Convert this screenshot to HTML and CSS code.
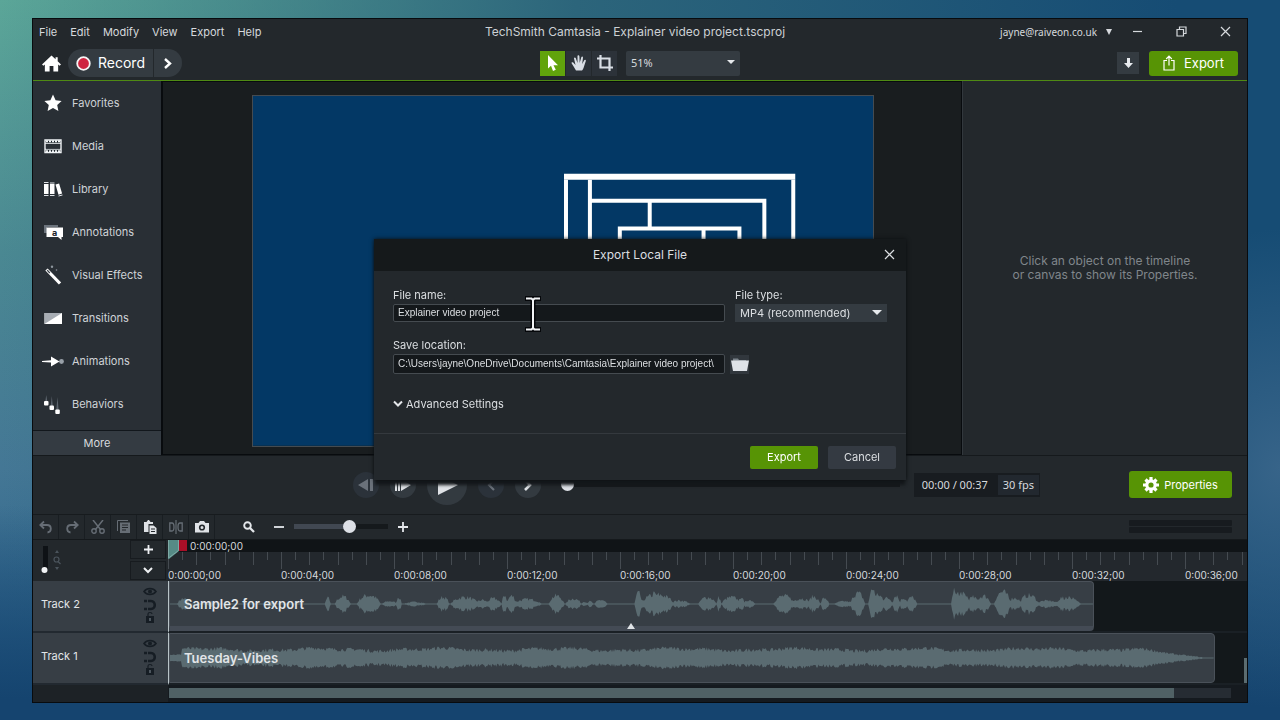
FILE: index.html
```html
<!DOCTYPE html>
<html lang="en">
<head>
<meta charset="utf-8">
<title>TechSmith Camtasia - Explainer video project.tscproj</title>
<link rel="stylesheet" href="styles.css">
</head>
<body>
<div class="window">
  <header class="titlebar">
    <nav class="menu">
      <button>File</button><button>Edit</button><button>Modify</button><button>View</button><button>Export</button><button>Help</button>
    </nav>
    <h1 class="title">TechSmith Camtasia - Explainer video project.tscproj</h1>
    <div class="account">
      <button class="user">jayne@raiveon.co.uk <svg width="6" height="6" viewBox="0 0 6 6"><path d="M0 0h6L3 6z" fill="currentColor"/></svg></button>
      <button class="win-btn" aria-label="Minimize"><svg width="11" height="11" viewBox="0 0 11 11"><path d="M1 5.500h9" class="line"/></svg></button>
      <button class="win-btn" aria-label="Restore"><svg width="11" height="11" viewBox="0 0 11 11"><path d="M1 3.500h6.500v6.500H1zM3.500 3.500V1H10v6.500H7.500" class="line"/></svg></button>
      <button class="win-btn" aria-label="Close"><svg width="11" height="11" viewBox="0 0 11 11"><path d="M1 1l9 9M10 1l-9 9" class="line"/></svg></button>
    </div>
  </header>

  <div class="toolbar">
    <div class="tool-left">
      <button class="home" aria-label="Home"><svg width="19" height="17" viewBox="0 0 20 17"><path d="M10 0L0 9.500l1.500 1.300L3 9.500V17h5v-6h4v6h5V9.500l1.500 1.300L20 9.500l-3.500-3.300V2h-2.200v2z" fill="#fff"/></svg></button>
      <div class="record-group">
        <button class="record"><svg width="15" height="15" viewBox="0 0 15 15"><circle cx="7.500" cy="7.500" r="6.300" fill="#cf2440" stroke="#f5f5f5" stroke-width="1.800"/></svg>Record</button>
        <button class="record-more" aria-label="More recording options"><svg width="8" height="11" viewBox="0 0 8 11"><path d="M1 1l5 4.500L1 10" fill="none" stroke="#fff" stroke-width="2.400"/></svg></button>
      </div>
    </div>
    <div class="tool-mid">
      <button class="mode active" aria-label="Select"><svg width="12" height="16" viewBox="0 0 12 16"><path d="M1 0v13.500l3-2.800L6 16l2.800-1.200-2.300-4.600H11z" fill="#fff"/></svg></button>
      <button class="mode" aria-label="Pan"><svg width="16" height="16" viewBox="0 0 16 16"><path d="M5 15.500C3.500 13 2 10.500.6 8.300c-.6-1 .8-1.600 1.600-.8L4.500 10 3 3.500c-.2-1.200 1.300-1.600 1.700-.4L6.500 8V1.200C6.500-.2 8.300-.2 8.400 1.200L8.700 8l1.600-5.800c.4-1.200 1.900-.8 1.700.4L11.200 9l2-3.800c.7-1.100 2-.4 1.600.7L13 11.500c-.5 1.800-1 3-2 4z" fill="#d9dee5"/></svg></button>
      <button class="mode" aria-label="Crop"><svg width="16" height="16" viewBox="0 0 16 16"><path d="M0 3.500h12.500V16M3.500 0v12.500H16" fill="none" stroke="#d9dee5" stroke-width="2.200"/></svg></button>
      <div class="select-wrap zoom-select">
        <select aria-label="Canvas zoom"><option>51%</option></select>
        <svg width="8" height="4" viewBox="0 0 8 4"><path d="M0 0h8L4 4z" fill="#e6e9ec"/></svg>
      </div>
    </div>
    <div class="tool-right">
      <button class="download" aria-label="Downloads"><svg width="9" height="10" viewBox="0 0 9 10"><path d="M3 0h3v5h3L4.500 10 0 5h3z" fill="#e8ebef"/></svg></button>
      <button class="export-main"><svg width="12" height="16" viewBox="0 0 12 16"><path d="M4 5.500H1V15h10V5.500H8M6 10.500V1.500M3.200 4L6 1.200 8.800 4" class="line"/></svg>Export</button>
    </div>
  </div>

  <main class="workspace">
    <aside class="sidebar">
      <ul>
        <li><button><svg width="20" height="20" viewBox="0 0 20 20"><path d="M10 1.500l2.600 5.700 6 .7-4.400 4.100 1.200 6-5.400-3L4.600 18l1.200-6L1.400 7.900l6-.7z" fill="#fff"/></svg>Favorites</button></li>
        <li><button><svg width="20" height="20" viewBox="0 0 20 20"><path d="M2 4h16v12.500H2z" fill="#182027" stroke="#f0f3f5" stroke-width="1.400"/><path d="M3 5.300h14M3 15.200h14" stroke="#f0f3f5" stroke-width="2" stroke-dasharray="2 1"/><path d="M2 7.300h16M2 13.200h16" stroke="#f0f3f5"/><path d="M3 8h14v4.700H3z" fill="#292f35"/></svg>Media</button></li>
        <li><button><svg width="20" height="20" viewBox="0 0 20 20"><path d="M1 5h4.500v10H1zM7 5h4.500v10H7zM12.500 5.600l3.600-1 3 10-3.600 1.200z" fill="#fff"/><path d="M1 3.500h4.500M7 4h4.500M1 16.500h4.500M7 16.500h4.500M15.500 17l4-1" stroke="#dfe3e7"/></svg>Library</button></li>
        <li><button><svg width="20" height="20" viewBox="0 0 20 20"><path d="M1 3h14v2H4v6H1z" fill="#6b737c"/><path d="M3.500 5.500H20V15h-1.500v3L15 15H3.500z" fill="#fff"/><text x="9" y="13.500" font-size="9" font-weight="700" fill="#20262b">a</text></svg>Annotations</button></li>
        <li><button><svg width="20" height="20" viewBox="0 0 20 20"><path d="M3.500 4.500L17 18.500" stroke="#fff" stroke-width="3.200"/><path d="M4.200 5.200L6.800 8" stroke="#333b43" stroke-width="1.200"/><circle cx="9" cy="1.800" r="1.200" fill="#8e969e"/><circle cx="13.500" cy="5" r=".8" fill="#8e969e"/></svg>Visual Effects</button></li>
        <li><button><svg width="20" height="20" viewBox="0 0 20 20"><path d="M1.500 5h17.500v11H1.500z" fill="#fff"/><path d="M1.500 5H19L1.500 16z" fill="#a7adb4"/></svg>Transitions</button></li>
        <li><button><svg class="wide" width="24" height="20" viewBox="0 0 24 20"><circle cx="20.500" cy="10.500" r="2.400" fill="#98a0a8"/><path d="M1 10l9-.8V5.500l8.500 5-8.500 5v-4L1 11z" fill="#fff"/></svg>Animations</button></li>
        <li><button><svg width="20" height="20" viewBox="0 0 20 20"><path d="M3.300 1l1.200 8H2zM8.800 2L10 14H7.500zM14.500 3l1.200 14h-2.500z" fill="#5d656e"/><rect x="1" y="7" width="4.500" height="4.500" rx="1" fill="#fff"/><rect x="6.500" y="11.500" width="4.500" height="4.500" rx="1" fill="#fff"/><rect x="12.300" y="15.500" width="4.500" height="4.500" rx="1" fill="#fff"/></svg>Behaviors</button></li>
      </ul>
      <button class="more">More</button>
    </aside>
    <section class="canvas" aria-label="Canvas">
      <svg class="video" viewBox="0 0 622 351" preserveAspectRatio="none">
        <path d="M0 0h622v351H0z" fill="#033865"/>
        <g fill="none" stroke="#fff" stroke-width="4">
          <path d="M312 78h232v6H312z" fill="#fff" stroke="none"/>
          <path d="M314 84v260M542 84v260M338 84v260M338 105h175v239M398 105v28M368 200v-67h120v67M452 133v60"/>
        </g>
      </svg>
    </section>
    <aside class="properties"><p>Click an object on the timeline<br>or canvas to show its Properties.</p></aside>
  </main>

  <section class="playback">
    <div class="transport">
      <button class="round dim" aria-label="Previous frame"><svg width="16" height="14" viewBox="0 0 16 14"><path d="M10 1v12L0 7zM12 1h3v12h-3z" fill="currentColor"/></svg></button>
      <button class="round" aria-label="Next frame"><svg width="16" height="14" viewBox="0 0 16 14"><path d="M6 1v12l10-6zM0 1h2v12H0zM3 1h2v12H3z" fill="currentColor"/></svg></button>
      <button class="round play" aria-label="Play"><svg width="20" height="22" viewBox="0 0 20 22"><path d="M0 1v20l20-10z" fill="currentColor"/></svg></button>
      <button class="round dim" aria-label="Previous marker"><svg width="8" height="12" viewBox="0 0 8 12"><path d="M7 1L2 6l5 5" fill="none" stroke="currentColor" stroke-width="2.200"/></svg></button>
      <button class="round" aria-label="Next marker"><svg width="8" height="12" viewBox="0 0 8 12"><path d="M1 1l5 5-5 5" fill="none" stroke="currentColor" stroke-width="2.600"/></svg></button>
      <input class="scrub" type="range" min="0" max="37" value="0" aria-label="Playback position">
    </div>
    <div class="time"><span>00:00 / 00:37</span><span class="fps">30 fps</span></div>
    <button class="prop-btn"><svg width="16" height="16" viewBox="-8 -8 16 16"><circle r="4.200" fill="none" stroke="#fff" stroke-width="3.200"/><path d="M0-8v3M0 8V5M-8 0h3M8 0H5M-5.500-5.500l2 2M5.500 5.500l-2-2M5.500-5.500l-2 2M-5.500 5.500l2-2" stroke="#fff" stroke-width="3.200"/></svg>Properties</button>
  </section>

  <section class="timeline-tools">
    <div class="edit-tools">
      <button class="dim" aria-label="Undo"><svg width="14" height="14" viewBox="0 0 14 14"><path d="M1 5h7c5 0 5 7 .5 7.500M5 1.500L1.200 5 5 8.500" fill="none" stroke="currentColor" stroke-width="1.800"/></svg></button>
      <button class="dim" aria-label="Redo"><svg width="14" height="14" viewBox="0 0 14 14"><path d="M13 5H6c-5 0-5 7-.5 7.500M9 1.500L12.800 5 9 8.500" fill="none" stroke="currentColor" stroke-width="1.800"/></svg></button>
      <button class="dim" aria-label="Cut"><svg width="14" height="14" viewBox="0 0 14 14"><path d="M2 0l7.500 9.500M12 0L4.500 9.500" stroke="currentColor" stroke-width="1.500"/><circle cx="3" cy="11" r="2.200" fill="none" stroke="currentColor" stroke-width="1.400"/><circle cx="11" cy="11" r="2.200" fill="none" stroke="currentColor" stroke-width="1.400"/></svg></button>
      <button class="dim" aria-label="Copy"><svg width="14" height="14" viewBox="0 0 14 14"><path d="M.5 11V.5H11" fill="none" stroke="currentColor"/><path d="M3 2.500h10V13H3z" fill="currentColor"/><path d="M5 5h6M5 7.500h6M5 10h4" stroke="#22272b"/></svg></button>
      <button aria-label="Paste"><svg width="14" height="14" viewBox="0 0 14 14"><path d="M1 2h2.500L5 0h1l1.500 2H10v2H5.500v8H1z" fill="currentColor"/><path d="M6.500 5.500h4L13.500 8v6h-7z" fill="currentColor"/><path d="M8 9h4M8 11.500h4" stroke="#22272b"/></svg></button>
      <button class="dim" aria-label="Split"><svg width="14" height="14" viewBox="0 0 14 14"><path d="M.8 3H3c1.500 0 2 1 2 4s-.5 4-2 4H.8zM13.200 3H11c-1.500 0-2 1-2 4s.5 4 2 4h2.200z" fill="none" stroke="currentColor" stroke-width="1.300"/><path d="M7 0v14" stroke="currentColor" stroke-width="1.200"/></svg></button>
      <button aria-label="Add screenshot"><svg width="14" height="12" viewBox="0 0 14 12"><path d="M0 2h3.500L5 0h4l1.500 2H14v9.500H0z" fill="currentColor"/><circle cx="7" cy="6.500" r="2.300" fill="none" stroke="#22272b" stroke-width="1.600"/></svg></button>
    </div>
    <div class="zoom-tools">
      <svg class="lens" width="12" height="12" viewBox="0 0 12 12"><circle cx="4.500" cy="4.500" r="3.300" fill="none" stroke="#e4e7eb" stroke-width="1.900"/><path d="M7 7l4 4" stroke="#e4e7eb" stroke-width="2.300"/></svg>
      <button aria-label="Zoom out"><svg width="10" height="10" viewBox="0 0 10 10"><path d="M0 5h10" stroke="currentColor" stroke-width="1.800"/></svg></button>
      <input class="zoom-range" type="range" min="0" max="100" value="61" aria-label="Timeline zoom">
      <button aria-label="Zoom in"><svg width="10" height="10" viewBox="0 0 10 10"><path d="M0 5h10M5 0v10" stroke="currentColor" stroke-width="1.800"/></svg></button>
    </div>
    <div class="meter"><i></i><i></i></div>
  </section>

  <section class="timeline">
    <div class="corner">
      <svg width="28" height="34" viewBox="0 0 28 34"><path d="M5 2h5v24H5z" fill="#0e1216"/><circle cx="6.500" cy="26" r="3" fill="#f2f4f6"/><circle cx="18.500" cy="15.500" r="2.500" fill="none" stroke="#4b545c" stroke-width="1.200"/><path d="M20 17.500l2.500 2.500" stroke="#4b545c" stroke-width="1.200"/><path d="M17 9h4l-2-3zM17 23h4l-2 3z" fill="#4b545c"/></svg>
      <div class="corner-btns">
        <button aria-label="Add track"><svg width="9" height="9" viewBox="0 0 9 9"><path d="M0 4.500h9M4.500 0v9" stroke="#eef0f3" stroke-width="1.800"/></svg></button>
        <button aria-label="Track options"><svg width="10" height="7" viewBox="0 0 10 7"><path d="M1 1l4 4 4-4" fill="none" stroke="#eef0f3" stroke-width="2"/></svg></button>
      </div>
    </div>
    <div class="ruler">
      <div class="playtime">0:00:00;00</div>
      <div class="ticks" id="ticks"></div>
      <svg class="playhead" width="20" height="19" viewBox="0 0 20 19"><path d="M0 0h11v11L1 19H0z" fill="#568b86"/><path d="M11 0h8v11h-8z" fill="#a80f27"/><path d="M.5 0v18l10-7.500V0" fill="none" stroke="#7fa9a5"/></svg>
    </div>

    <div class="track-head"><span>Track 2</span>
      <svg width="14" height="40" viewBox="0 0 14 40"><path d="M1 7.500c3-4 9-4 12 0-3 4-9 4-12 0z" fill="none" stroke="#161d24" stroke-width="1.600"/><circle cx="7" cy="7.500" r="2" fill="#161d24"/><path d="M5 17h3c5 0 5 8 0 8H5" fill="none" stroke="#161d24" stroke-width="2.600"/><path d="M1 17h3M1 25h3" stroke="#161d24" stroke-width="2.600"/><path d="M3 32h8v7H3z" fill="#161d24"/><path d="M5 32v-2c0-2 4-2 4 0" fill="none" stroke="#161d24" stroke-width="1.200"/><path d="M6 34h2v3H6z" fill="#4d565e"/></svg>
    </div>
    <div class="lane">
      <div class="clip voice" style="width:85.8%"><svg class="wave" data-wave="voice" viewBox="0 -25 924 50" preserveAspectRatio="none"></svg><span>Sample2 for export</span>
        <i class="expand"></i></div>
    </div>

    <div class="track-head"><span>Track 1</span>
      <svg width="14" height="40" viewBox="0 0 14 40"><path d="M1 7.500c3-4 9-4 12 0-3 4-9 4-12 0z" fill="none" stroke="#161d24" stroke-width="1.600"/><circle cx="7" cy="7.500" r="2" fill="#161d24"/><path d="M5 17h3c5 0 5 8 0 8H5" fill="none" stroke="#161d24" stroke-width="2.600"/><path d="M1 17h3M1 25h3" stroke="#161d24" stroke-width="2.600"/><path d="M3 32h8v7H3z" fill="#161d24"/><path d="M5 32v-2c0-2 4-2 4 0" fill="none" stroke="#161d24" stroke-width="1.200"/><path d="M6 34h2v3H6z" fill="#4d565e"/></svg>
    </div>
    <div class="lane">
      <div class="clip music" style="width:97%"><svg class="wave" data-wave="music" viewBox="0 -25 1046 50" preserveAspectRatio="none"></svg><span>Tuesday-Vibes</span></div>
      <i class="vscroll"></i>
    </div>

    <div class="foot"></div>
    <div class="hscroll"><div><i style="width:94.6%"></i></div></div>
  </section>
</div>

<div class="overlay">
  <form class="dialog" role="dialog" aria-labelledby="dlg-title">
    <header>
      <h2 id="dlg-title">Export Local File</h2>
      <button type="button" aria-label="Close dialog"><svg width="11" height="11" viewBox="0 0 11 11"><path d="M1 1l9 9M10 1l-9 9" class="line"/></svg></button>
    </header>
    <div class="fields">
      <div class="field">
        <label for="fname">File name:</label>
        <input id="fname" type="text" value="Explainer video project">
        <svg class="ibeam" width="18" height="36" viewBox="0 0 18 36"><path d="M1 2.500h16M1 33.500h16M9 2v32" stroke="#05070a" stroke-width="5"/><path d="M2 2.500h5.500L9 4l1.500-1.500H16M2 33.500h5.500L9 32l1.500 1.500H16M9 3v30" stroke="#f2f4f6" stroke-width="2" fill="none"/></svg>
      </div>
      <div class="field">
        <label for="ftype">File type:</label>
        <div class="select-wrap type-select">
          <select id="ftype"><option>MP4 (recommended)</option></select>
          <svg width="10" height="5" viewBox="0 0 10 5"><path d="M0 0h10L5 5z" fill="#e6e9ec"/></svg>
        </div>
      </div>
      <div class="field save">
        <label for="fpath">Save location:</label>
        <input id="fpath" type="text" value="C:\Users\jayne\OneDrive\Documents\Camtasia\Explainer video project\">
      </div>
      <button type="button" class="browse" aria-label="Browse"><svg width="18" height="14" viewBox="0 0 18 14"><path d="M2 5V1.500h5L8 3h7v2z" fill="#7b838b"/><path d="M0 3.500h18L16 14H2z" fill="#dfe3e8"/></svg></button>
    </div>
    <button type="button" class="advanced"><svg width="10" height="8" viewBox="0 0 10 8"><path d="M1 1.500L5 5.500l4-4" fill="none" stroke="#e4e7ea" stroke-width="2"/></svg>Advanced Settings</button>
    <footer>
      <button type="button" class="primary">Export</button>
      <button type="button" class="secondary">Cancel</button>
    </footer>
  </form>
</div>
<script src="timeline.js"></script>
</body>
</html>
```

FILE: styles.css
```css
* { box-sizing: border-box; }
body {
  margin: 0;
  min-height: 100vh;
  padding: 18px 32px;
  display: flex;
  color: #d6d9dd;
  font: 11px/16px Inter, "Liberation Sans", sans-serif;
  background:
    radial-gradient(ellipse 180px 240px at 100% 65%, #376489, transparent),
    linear-gradient(to bottom, transparent 70%, #15446f 97%),
    linear-gradient(to right, transparent, #2c657b 45%, #164c74 92%),
    linear-gradient(to bottom, #5ba698, #4a8892 35%, #447795 65%, #235a86);
}
h1, h2, p, ul { margin: 0; padding: 0; font-weight: 400; }
ul { list-style: none; }
button, input, select { font: inherit; color: inherit; border: 0; padding: 0; margin: 0; background: none; border-radius: 0; }
button { display: flex; align-items: center; justify-content: center; white-space: nowrap; }
svg { display: block; flex: none; }
.line { fill: none; stroke: currentColor; stroke-width: 1.2; }

.window {
  flex: 1;
  min-width: 0;
  display: flex;
  flex-direction: column;
  border: 1px solid #080b0e;
  background: #23282c;
}

/* Title bar and main toolbar */
.titlebar {
  height: 27px;
  padding: 0 16px 2px 6px;
  display: grid;
  grid-template-columns: 1fr auto 1fr;
  align-items: center;
}
.menu { display: flex; gap: 13px; }
.title { font-size: 12px; color: #cdd1d5; }
.account { display: flex; justify-content: flex-end; align-items: center; }
.user { gap: 9px; margin-right: 20px; font-family: "Noto Sans", sans-serif; font-size: 10px; }
.win-btn { width: 11px; margin-left: 33px; }
.user + .win-btn { margin-left: 0; }
.toolbar {
  height: 35px;
  padding: 0 9px;
  display: grid;
  grid-template-columns: 1fr auto 1fr;
  align-items: center;
  border-bottom: 1px solid #4f8a14;
}
.tool-left, .tool-mid, .tool-right, .record-group { display: flex; align-items: center; }
.tool-left { gap: 7px; }
.record-group { gap: 1px; }
.record { height: 28px; padding: 0 8px; gap: 7px; border-radius: 14px 0 0 14px; background: #343b41; font-size: 14px; color: #fff; }
.record-more { width: 28px; height: 28px; border-radius: 0 14px 14px 0; background: #343b41; }
.tool-mid { gap: 1px; }
.mode { width: 25px; height: 25px; background: #2c3239; }
.mode.active { background: #61a30c; }
.select-wrap { position: relative; background: #343b41; }
.select-wrap select { appearance: none; width: 100%; height: 100%; padding: 0 20px 0 5px; }
.select-wrap svg { position: absolute; right: 5px; top: calc(50% - 3px); pointer-events: none; }
.zoom-select { width: 114px; height: 25px; margin-left: 8px; font-family: "Noto Sans", sans-serif; border-radius: 2px; }
.tool-right { gap: 10px; justify-content: flex-end; }
.download { width: 22px; height: 22px; background: #343b41; }
.export-main { width: 89px; height: 25px; gap: 9px; border-radius: 3px; background: #579405; color: #fff; font-size: 13px; }

/* Workspace */
.workspace { flex: 1; display: grid; grid-template-columns: 128px minmax(0, 1fr) 285px; background: #080b0e; border-bottom: 1px solid #15191c; }
.sidebar { display: flex; flex-direction: column; justify-content: space-between; background: #292f35; }
.sidebar li button { width: 100%; height: 43px; padding-left: 10px; gap: 9px; justify-content: flex-start; color: #cfd3d7; }
.sidebar .wide { margin: 0 -2px; }
.more { height: 25px; border-top: 1px solid #12171c; background: #343b42; }
.canvas { margin: 1px 1px 1px 2px; padding: 13px 87px 7px 89px; background: #191d1f; }
.video { width: 100%; height: 100%; border: 1px solid #454b50; }
.properties { display: grid; place-items: center; background: #23282c; border-left: 1px solid #32383d; color: #80868b; text-align: center; font-size: 12px; line-height: 14px; }

/* Playback bar */
.playback { height: 58px; padding: 0 15px 0 320px; display: flex; align-items: center; }
.transport { flex: 1; display: flex; align-items: center; }
.round { width: 26px; height: 26px; flex: none; border-radius: 50%; background: #333a40; color: #dfe2e6; margin-right: 11px; }
.round.dim { background: #2b323a; color: #6a717a; }
.round.play { width: 40px; height: 40px; padding-left: 2px; }
input[type="range"] { appearance: none; outline: 0; }
input[type="range"]::-webkit-slider-thumb { appearance: none; width: 13px; height: 13px; border-radius: 50%; background: #dde0e6; }
.scrub { flex: 1; min-width: 0; height: 5px; margin-left: 9px; background: #15191c; }
.time { display: flex; align-items: center; height: 24px; margin-left: 14px; padding: 1px 1px 1px 8px; background: #181c20; font-family: "Noto Sans", sans-serif; gap: 10px; }
.fps { height: 20px; padding: 2px 5px; background: #22282f; }
.prop-btn { width: 103px; height: 27px; margin-left: 89px; gap: 5px; border-radius: 3px; background: #579405; color: #fff; }

/* Timeline tools */
.timeline-tools { height: 26px; padding-right: 15px; display: flex; align-items: center; border-top: 1px solid #171b1e; border-bottom: 1px solid #15191c; }
.edit-tools { display: flex; }
.edit-tools button { width: 26px; height: 24px; border-right: 1px solid #191e22; color: #dfe2e6; }
.edit-tools .dim { color: #666d75; }
.zoom-tools { display: flex; align-items: center; gap: 10px; margin-left: 28px; color: #e4e7eb; }
.lens { margin-right: 9px; }
.zoom-range { width: 94px; height: 5px; background: linear-gradient(to right, #414852 60%, #15191c 60%); }
.meter { width: 103px; margin-left: auto; display: grid; gap: 1px; }
.meter i { height: 6px; border-radius: 1px; background: #171b1f; }

/* Timeline */
.timeline { display: grid; grid-template-columns: 135px minmax(0, 1fr); background: #13181b; }
.corner { height: 41px; display: flex; justify-content: space-between; padding: 4px 2px 0 5px; background: #23282c; }
.corner-btns { display: grid; gap: 1px; margin-top: -4px; }
.corner-btns button { width: 36px; height: 19px; border: 1px solid #171b1f; }
.ruler { position: relative; height: 41px; background: #23282d; }
.playtime { height: 12px; padding-left: 22px; background: #101417; font-size: 10px; line-height: 12px; }
.ticks { display: flex; overflow: hidden; font-size: 10px; }
.ticks div { flex: 0 0 113px; line-height: 12px; }
.playhead { position: absolute; left: 0; top: 0; }
.track-head { display: flex; align-items: center; justify-content: space-between; height: 52px; padding: 0 11px 4px 8px; border-bottom: 2px solid #222930; background: #373e45; color: #e2e5e8; }
.lane { position: relative; height: 52px; border-left: 1px solid #b9c4c8; border-bottom: 2px solid #1a2025; }
.clip { position: relative; height: 100%; border: 1px solid #4a5159; border-radius: 0 4px 4px 0; background: #373e45; display: flex; align-items: center; padding-left: 14px; font-size: 13px; font-weight: 600; color: #e2e5e8; }
.clip span { position: relative; }
.voice { border-bottom: 5px solid #444b55; }
.wave { position: absolute; left: 0; top: 0; width: 100%; height: 100%; fill: #5a6b71; }
.expand { position: absolute; left: calc(50% - 4px); bottom: -3px; border: 4px solid transparent; border-top: 0; border-bottom: 6px solid #dfe3e6; }
.vscroll { position: absolute; right: 0; bottom: 0; width: 3px; height: 25px; background: #5b6c70; }
.foot { height: 17px; background: #1d2226; }
.hscroll { padding: 3px 16px 4px 1px; background: #151a1f; }
.hscroll div { background: #262c33; }
.hscroll i { display: block; height: 10px; background: #506165; }

/* Export dialog */
.overlay { position: fixed; inset: 0; padding-bottom: 2px; display: grid; place-items: center; }
.dialog { width: 532px; background: #23282c; box-shadow: 0 0 4px #0b0e11, 0 6px 3px -1px #15191c; color: #dcdfe2; }
.dialog header { height: 32px; display: grid; grid-template-columns: 11px 1fr 11px; align-items: center; padding: 0 11px; background: #15191b; }
.dialog h2 { grid-column: 2; font-size: 12px; text-align: center; }
.fields { display: grid; grid-template-columns: 332px 152px; column-gap: 10px; row-gap: 15px; padding: 16px 19px 0; }
.field { position: relative; }
.field label { display: block; height: 17px; }
.field input { display: block; width: 100%; height: 18px; padding: 0 2px 0 4px; border: 1px solid #454b50; border-radius: 2px; background: #14181b; font-family: "Liberation Sans", sans-serif; font-size: 10px; }
.field.save input { height: 20px; }
.type-select { height: 18px; }
.ibeam { position: absolute; left: 131px; top: 9px; }
.browse { width: 19px; height: 19px; margin-left: -5px; align-self: end; background: #31373d; }
.advanced { margin: 22px 0 0 19px; gap: 3px; }
.dialog footer { display: flex; justify-content: flex-end; gap: 10px; margin-top: 21px; padding: 12px 10px 11px; border-top: 1px solid #34393e; }
.primary, .secondary { width: 68px; height: 23px; border-radius: 2px; }
.primary { background: #579405; color: #fff; }
.secondary { background: #343a42; }
```

FILE: timeline.js
```javascript
// Ruler: one cell for every four seconds, a tick for every half second
const offsets = [0, 14, 28, 42, 57, 71, 85, 99];
const ticks = document.getElementById('ticks');
for (let s = 0; s <= 36; s += 4) {
  const path = offsets.map((x, i) => `M${x + 0.5} 0v${i === 0 ? 17 : i % 2 ? 8 : 13}`).join('');
  ticks.insertAdjacentHTML('beforeend',
    `<div><svg width="113" height="17"><path d="${path}" stroke="#454b51"/></svg>0:00:${String(s).padStart(2, '0')};00</div>`);
}

// Spoken phrases of the voice clip: start, end, peak
const phrases = [
  [8,19,8],[38,44,4],[98,104,4],[156,160,9],[166,180,11],[188,210,13],[213,227,4],[227,231,11],[235,256,3],
  [268,279,10],[282,308,10],[307,318,6],[317,331,8],[333,337,14],[338,346,12],[345,371,7],[380,394,12],
  [397,411,8],[413,417,4],[418,423,4],[426,437,6],[466,472,16],[472,504,14],[483,487,17],[501,520,5],
  [530,546,10],[548,551,10],[553,571,10],[570,574,12],[575,585,6],[605,624,12],[622,641,8],[639,650,11],
  [652,659,9],[666,684,4],[682,695,16],[700,707,21],[703,715,13],[713,723,9],[724,730,13],[731,738,9],
  [738,747,10],[783,790,21],[786,800,16],[796,810,9],[801,807,13],[808,821,12],[826,841,18],[839,852,9],
  [851,869,13],[868,889,5],[888,898,9],[894,907,11],[902,911,7]
];
let seed = 7;
const rand = () => (seed = (seed * 16807) % 2147483647) / 2147483647;
const voice = x => {
  let a = 0.5;
  for (const [s, e, p] of phrases) {
    if (x >= s && x <= e) a = Math.max(a, p * Math.pow(Math.sin(Math.PI * (x - s + 0.5) / (e - s + 1)), 0.6) * (0.5 + rand() * 0.5));
  }
  return a;
};
const music = x => {
  if (x < 12) return 3 + rand();
  const base = 8.2 + 1.1 * Math.sin(x / 19) + 0.6 * Math.sin(x / 7) - 1.5 + rand() * 4;
  return x < 970 ? base : Math.max(0.4, base * Math.pow((1046 - x) / 76, 1.2));
};
document.querySelectorAll('.wave').forEach(svg => {
  const isVoice = svg.dataset.wave === 'voice';
  const width = isVoice ? 924 : 1046;
  const top = [];
  const bottom = [];
  for (let x = 0; x <= width; x++) {
    const a = isVoice ? voice(x) : music(x);
    top.push(`${x} ${(-a).toFixed(1)}`);
    bottom.unshift(`${x} ${(a * 0.96).toFixed(1)}`);
  }
  svg.innerHTML = `<path d="M${top.concat(bottom).join('L')}z"/>`;
});
```
